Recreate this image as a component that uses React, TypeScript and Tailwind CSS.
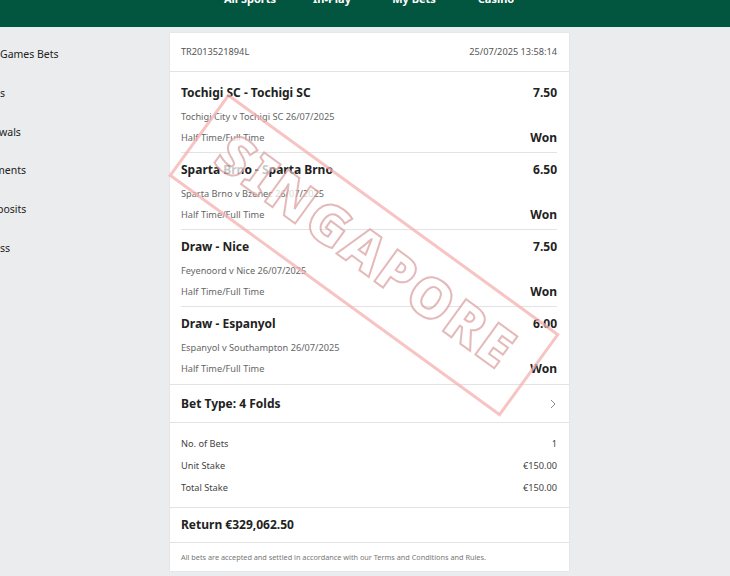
import React from 'react';

const selections = [
	{ pick: 'Tochigi SC - Tochigi SC', odds: '7.50', event: 'Tochigi City v Tochigi SC 26/07/2025' },
	{ pick: 'Sparta Brno - Sparta Brno', odds: '6.50', event: 'Sparta Brno v Bzenec 26/07/2025' },
	{ pick: 'Draw - Nice', odds: '7.50', event: 'Feyenoord v Nice 26/07/2025' },
	{ pick: 'Draw - Espanyol', odds: '6.00', event: 'Espanyol v Southampton 26/07/2025' },
];

const sideItems = [
	{ label: 'Games Bets', cls: '' },
	{ label: 's', cls: '' },
	{ label: 'wals', cls: '-ml-[1px]' },
	{ label: 'ments', cls: '-ml-[5px]' },
	{ label: 'posits', cls: '-ml-[3px]' },
	{ label: 'ss', cls: '' },
];

const Watermark: React.FC = () => (
	<div className="pointer-events-none absolute left-[-11px] top-[171px] flex h-[102px] w-[410px] rotate-[36deg] items-center justify-center border-[3px] border-[#f5b0b0] pb-[14px] opacity-75">
		<span className="text-[55px] font-black leading-none tracking-[3px] text-white [-webkit-text-stroke:2px_#dca2a2]">
			SINGAPORE
		</span>
	</div>
);

const App: React.FC = () => {
	return (
		<div className="min-h-[576px] w-[730px] overflow-hidden bg-[#ebeced] font-['Noto_Sans',sans-serif] text-[#222]">
			{/* top nav, scrolled so only the bottom of the labels shows */}
			<div className="h-[27px] overflow-hidden bg-[#02553f]">
				<div className="-mt-[9px] ml-[209px] flex text-[11px] font-bold text-white">
					<div className="w-[82px] text-center">All Sports</div>
					<div className="w-[82px] text-center">In-Play</div>
					<div className="w-[82px] text-center">My Bets</div>
					<div className="w-[82px] text-center">Casino</div>
				</div>
			</div>

			<div className="flex">
				<div className="w-[170px] overflow-hidden pt-[18px]">
					{sideItems.map((item) => (
						<div key={item.label} className={`h-[38.8px] whitespace-nowrap text-[10.5px] leading-[18px] text-[#222] ${item.cls}`}>
							{item.label}
						</div>
					))}
				</div>

				<div className="relative mt-[6px] w-[399px] bg-white shadow-[0_0_1px_rgba(0,0,0,0.15)]">
					<div className="flex h-[39px] items-center justify-between border-b border-[#e3e3e3] px-[11px] pr-[12px] text-[9.2px] text-[#555]">
						<span>TR2013521894L</span>
						<span>25/07/2025 13:58:14</span>
					</div>

					<div className="border-b border-[#e3e3e3] px-[11px] pr-[12px] pt-[4px]">
						{selections.map((s, i) => (
							<div
								key={s.pick}
								className={`flex h-[77px] flex-col pt-[8px] ${i < selections.length - 1 ? 'border-b border-[#e3e3e3]' : ''}`}
							>
								<div className="flex items-center justify-between text-[12px] font-bold leading-[18px]">
									<span>{s.pick}</span>
									<span>{s.odds}</span>
								</div>
								<div className="mt-[8px] text-[9.2px] leading-[14px] text-[#666]">{s.event}</div>
								<div className="mt-[6px] flex items-center justify-between leading-[16px]">
									<span className="text-[9.2px] text-[#666]">Half Time/Full Time</span>
									<span className="text-[12px] font-bold">Won</span>
								</div>
							</div>
						))}
					</div>

					<div className="flex h-[38px] items-center justify-between border-b border-[#e3e3e3] px-[11px] pr-[12px]">
						<span className="text-[12px] font-bold">Bet Type: 4 Folds</span>
						<svg width="8" height="10" viewBox="0 0 8 10" fill="none" stroke="#8a8a8a" strokeWidth="1">
							<path d="M2 1l4 4-4 4" />
						</svg>
					</div>

					<div className="flex flex-col border-b border-[#e3e3e3] px-[11px] pr-[12px] pb-[8px] pt-[10px] text-[9.2px] text-[#444]">
						<div className="flex h-[22px] items-center justify-between">
							<span>No. of Bets</span>
							<span>1</span>
						</div>
						<div className="flex h-[22px] items-center justify-between">
							<span>Unit Stake</span>
							<span>€150.00</span>
						</div>
						<div className="flex h-[22px] items-center justify-between">
							<span>Total Stake</span>
							<span>€150.00</span>
						</div>
					</div>

					<div className="flex h-[35px] items-center border-b border-[#e3e3e3] px-[11px] text-[12px] font-bold">
						Return €329,062.50
					</div>

					<div className="flex h-[28px] items-center px-[11px] text-[7.3px] text-[#777]">
						All bets are accepted and settled in accordance with our Terms and Conditions and Rules.
					</div>

					<Watermark />
				</div>
			</div>
		</div>
	);
};

export default App;
